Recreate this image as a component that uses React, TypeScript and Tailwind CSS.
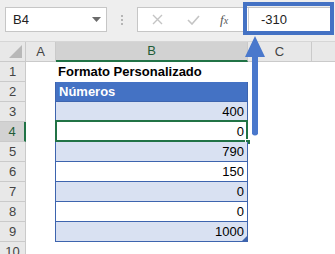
import React from "react";

const rows: { n: number; b?: string; kind: "title" | "head" | "odd" | "even" | "none" }[] = [
  { n: 1, b: "Formato Personalizado", kind: "title" },
  { n: 2, b: "Números", kind: "head" },
  { n: 3, b: "400", kind: "odd" },
  { n: 4, b: "0", kind: "even" },
  { n: 5, b: "790", kind: "odd" },
  { n: 6, b: "150", kind: "even" },
  { n: 7, b: "0", kind: "odd" },
  { n: 8, b: "0", kind: "even" },
  { n: 9, b: "1000", kind: "odd" },
  { n: 10, kind: "none" },
];

export default function App() {
  return (
    <div
      className="relative w-[335px] h-[254px] overflow-hidden bg-white text-[#000]"
      style={{ fontFamily: '"Liberation Sans", Arial, sans-serif' }}
    >
      {/* Toolbar */}
      <div className="flex h-[42px] items-start bg-[#eeeeee] border-b border-[#d6d6d6]">
        <div className="ml-[5px] mt-[7px] flex h-[25px] w-[102px] items-center justify-between border border-[#c6c6c6] bg-white pl-[7px] pr-[5px]">
          <span className="text-[13px] text-[#222]">B4</span>
          <svg width="9" height="5" viewBox="0 0 9 5">
            <path d="M0 0 H9 L4.5 5 Z" fill="#6b6b6b" />
          </svg>
        </div>
        <div className="ml-[14px] mt-[15px] flex w-[3px] flex-col gap-[2px]">
          <div className="h-[2px] w-[2px] bg-[#b5b5b5]" />
          <div className="h-[2px] w-[2px] bg-[#b5b5b5]" />
          <div className="h-[2px] w-[2px] bg-[#b5b5b5]" />
        </div>
        <div className="ml-[13px] mt-[7px] flex h-[25px] flex-1 border border-[#c6c6c6] bg-white">
          <div className="flex w-[110px] items-center">
            <svg className="ml-[14px]" width="11" height="11" viewBox="0 0 11 11">
              <path d="M1 1 L10 10 M10 1 L1 10" stroke="#c4c4c4" strokeWidth="1.4" />
            </svg>
            <svg className="ml-[24px]" width="13" height="10" viewBox="0 0 13 10">
              <path d="M1 5 L5 9 L12 1" stroke="#c4c4c4" strokeWidth="1.6" fill="none" />
            </svg>
            <span
              className="ml-[20px] text-[13px] italic text-[#555]"
              style={{ fontFamily: '"Liberation Serif", serif' }}
            >
              f<span className="text-[10px]">x</span>
            </span>
          </div>
          <div className="flex flex-1 items-center border-l border-[#d0d0d0] pl-[12px]">
            <span className="text-[13px] text-[#222]">-310</span>
          </div>
        </div>
        <div className="w-[1px]" />
      </div>

      {/* Column headers */}
      <div className="flex h-[20px] bg-[#e8e8e8] text-[13px] text-[#444]">
        <div className="relative w-[26px] border-r border-b border-[#cacaca]">
          <svg className="absolute right-[3px] bottom-[3px]" width="13" height="13" viewBox="0 0 13 13">
            <path d="M13 0 V13 H0 Z" fill="#b8b8b8" />
          </svg>
        </div>
        <div className="flex w-[30px] items-center justify-center border-r border-b border-[#cacaca]">A</div>
        <div className="flex w-[192px] items-center justify-center border-r border-[#cacaca] border-b-2 border-b-[#217346] bg-[#d2d2d2] text-[#1f5c37]">
          B
        </div>
        <div className="flex w-[64px] items-center justify-center border-r border-b border-[#cacaca]">C</div>
        <div className="flex-1 border-b border-[#cacaca]" />
      </div>

      {/* Rows */}
      {rows.map((r) => {
        const sel = r.n === 4;
        let bCls = "";
        if (r.kind === "title") bCls = "font-bold pl-[3px]";
        if (r.kind === "head") bCls = "bg-[#4472c4] text-white font-bold pl-[3px] border-x border-b border-[#3d64ae]";
        if (r.kind === "odd") bCls = "bg-[#d9e1f2] justify-end pr-[3px] border-x border-b border-[#3d64ae]";
        if (r.kind === "even") bCls = "bg-white justify-end pr-[3px] border-x border-b border-[#3d64ae]";
        return (
          <div key={r.n} className="flex h-[20px] text-[13px]">
            <div
              className={
                sel
                  ? "flex w-[26px] items-center justify-center border-b border-[#cacaca] border-r-2 border-r-[#217346] bg-[#d2d2d2] text-[#1f5c37]"
                  : "flex w-[26px] items-center justify-center border-r border-b border-[#cacaca] bg-[#e8e8e8] text-[#444]"
              }
            >
              {r.n}
            </div>
            <div className="w-[29px]" />
            <div className={"relative flex w-[193px] items-center " + bCls}>
              {r.b}
              {sel && (
                <>
                  <div className="absolute -left-[1px] -top-[2px] -right-[1px] -bottom-[1px] border-2 border-[#217346]" />
                  <div className="absolute -right-[4px] -bottom-[4px] h-[6px] w-[6px] border border-white bg-[#217346]" />
                </>
              )}
              {r.n === 9 && (
                <svg className="absolute right-0 bottom-0" width="5" height="5" viewBox="0 0 5 5">
                  <path d="M5 0 V5 H0 Z" fill="#3d64ae" />
                </svg>
              )}
            </div>
            <div className="flex-1" />
          </div>
        );
      })}

      {/* Highlight box over formula input */}
      <div className="absolute left-[243px] top-[2px] h-[33px] w-[91px] border-[4px] border-[#4472c4]" />

      {/* Arrow */}
      <svg className="absolute left-[244px] top-[36px]" width="24" height="102" viewBox="0 0 24 102">
        <path d="M11 0 L21 21 L14 21 L14 98 Q11 101 8 98 L8 21 L1 21 Z" fill="#4a78cc" />
      </svg>
    </div>
  );
}
